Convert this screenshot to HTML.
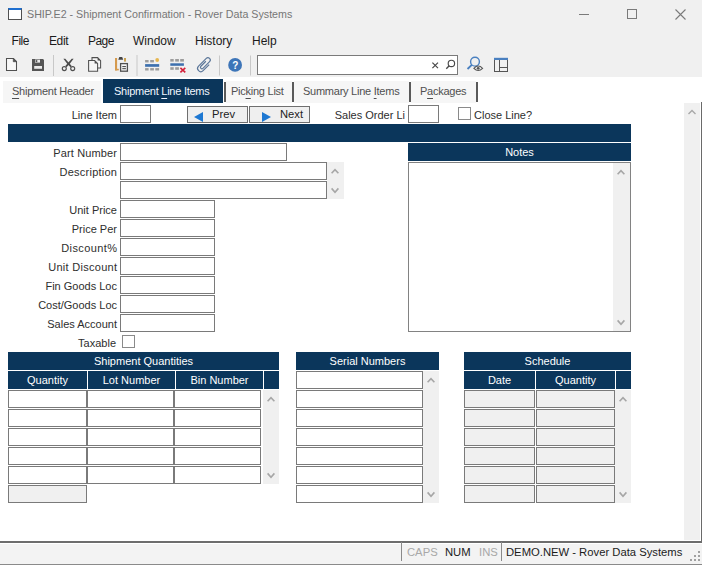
<!DOCTYPE html>
<html><head><meta charset="utf-8">
<style>
*{box-sizing:border-box;margin:0;padding:0}
html,body{width:702px;height:565px;overflow:hidden;background:#fff;font-family:"Liberation Sans",sans-serif}
.a{position:absolute}
.t{position:absolute;white-space:pre;line-height:14px}
#top{left:0;top:0;width:702px;height:77px;background:#f0f0f0}
.in{position:absolute;background:#fff;border:1px solid #7a7a7a}
.gr{position:absolute;background:#f0f0f0;border:1px solid #7a7a7a}
.hd{position:absolute;background:#0b365b;color:#fff;font-size:11px;line-height:18px;text-align:center;white-space:pre}
.lb{position:absolute;font-size:11px;color:#2e2e2e;text-align:right;white-space:pre;line-height:14px}
.sc{position:absolute;background:#f0f0f0}
.tab{position:absolute;top:81px;height:22px;background:#f6f6f6}
.tt{font-size:11px;letter-spacing:-0.25px}
.st{font-size:11.25px}
u{text-decoration-thickness:1px;text-underline-offset:3px}
.sep{position:absolute;width:1px;background:#a0a0a0}
.tsep{position:absolute;top:82px;width:2px;height:20px;background:#5a5a5a}
.btn{position:absolute;background:#efefef;border:1px solid #6f6f6f}
</style></head><body>
<div id="top" class="a"></div>

<!-- title bar -->
<div class="a" style="left:8px;top:8px;width:14px;height:12px;border:1px solid #505050;border-top:2px solid #1f6fd0;background:#fff"></div>
<div class="t" style="left:27px;top:7px;font-size:10.7px;color:#767676">SHIP.E2 - Shipment Confirmation - Rover Data Systems</div>
<div class="a" style="left:579px;top:14px;width:10px;height:1px;background:#7a7a7a"></div>
<div class="a" style="left:627px;top:9px;width:10px;height:10px;border:1px solid #7a7a7a"></div>
<svg class="a" style="left:675px;top:9px" width="11" height="11"><path d="M0.5 0.5L10.5 10.5M10.5 0.5L0.5 10.5" stroke="#7a7a7a" stroke-width="1.1"/></svg>

<!-- menu -->
<div class="t" style="left:11.5px;top:34px;font-size:12px;color:#1b1b1b;letter-spacing:-0.45px">File</div>
<div class="t" style="left:49px;top:34px;font-size:12px;color:#1b1b1b;letter-spacing:-0.4px">Edit</div>
<div class="t" style="left:88px;top:34px;font-size:12px;color:#1b1b1b;letter-spacing:-0.55px">Page</div>
<div class="t" style="left:133px;top:34px;font-size:12px;color:#1b1b1b">Window</div>
<div class="t" style="left:195px;top:34px;font-size:12px;color:#1b1b1b">History</div>
<div class="t" style="left:252px;top:34px;font-size:12px;color:#1b1b1b">Help</div>

<!-- toolbar -->

<svg class="a" style="left:0;top:52px" width="520" height="26" viewBox="0 52 520 26">
 <!-- new -->
 <path d="M6.5 58.5H13.5L16.5 61.5V70.5H6.5Z" fill="#f7f7f7" stroke="#505050" stroke-width="1.05"/>
 <path d="M13.3 58.5V61.7H16.5Z" fill="#505050" stroke="#505050" stroke-width="0.8"/>
 <!-- save -->
 <path d="M32 59H43L44 60V71H32Z" fill="#555"/>
 <rect x="35" y="59.6" width="5" height="3" fill="#ececec"/>
 <rect x="35.6" y="60.1" width="1.7" height="2" fill="#555"/>
 <rect x="34.2" y="66" width="7.8" height="2.8" fill="#ececec"/>
 <!-- sep -->
 <rect x="53" y="55" width="1" height="21" fill="#c8c8c8"/>
 <!-- scissors -->
 <path d="M63.4 58.7L65.3 58.7L71.7 65.9L70.5 67.2L67.4 64.1Z" fill="#4a4a4a"/>
 <path d="M73.6 58.7L71.7 58.7L65.3 65.9L66.5 67.2L69.6 64.1Z" fill="#4a4a4a"/>
 <circle cx="64.3" cy="68.6" r="2" fill="none" stroke="#505050" stroke-width="1.15"/>
 <circle cx="72.7" cy="68.6" r="2" fill="none" stroke="#505050" stroke-width="1.15"/>
 <!-- copy -->
 <path d="M92 57.6H97.6L100.6 60.6V68H92Z" fill="#f6f6f6" stroke="#505050" stroke-width="1.05"/>
 <path d="M97.6 57.6V60.6H100.6Z" fill="#505050"/>
 <path d="M88.6 60.5H94.6L97.6 63.5V71.3H88.6Z" fill="#f6f6f6" stroke="#505050" stroke-width="1.05"/>
 <path d="M94.6 60.5V63.5H97.6Z" fill="#505050"/>
 <!-- paste -->
 <rect x="115" y="58" width="2.1" height="12.4" fill="#d59a4e"/>
 <rect x="115" y="68.8" width="3.8" height="1.6" fill="#d59a4e"/>
 <rect x="124" y="58" width="2" height="3.6" fill="#c9a050"/>
 <path d="M118.3 59.8L119.3 57.1H122.2L123.2 59.8Z" fill="#444"/>
 <rect x="120.6" y="63.6" width="6.8" height="7.6" fill="#f6f6f6" stroke="#505050" stroke-width="1.3"/>
 <rect x="122.3" y="66" width="3.6" height="1.1" fill="#505050"/>
 <rect x="122.3" y="68.1" width="3.6" height="1.1" fill="#505050"/>
 <!-- sep -->
 <rect x="136.5" y="55" width="1" height="21" fill="#c8c8c8"/>
 <!-- insert row -->
 <rect x="145.1" y="60" width="3.5" height="2.4" fill="#9c9c9c"/>
 <rect x="150.2" y="60" width="3.7" height="2.4" fill="#9c9c9c"/>
 <circle cx="157.2" cy="60" r="1.9" fill="#e6b650"/>
 <rect x="145.1" y="64.1" width="14.1" height="2.7" fill="#3d70ae"/>
 <rect x="145.1" y="68.1" width="3.5" height="2.4" fill="#9c9c9c"/>
 <rect x="150.2" y="68.1" width="3.7" height="2.4" fill="#9c9c9c"/>
 <rect x="155.3" y="68.1" width="3.8" height="2.4" fill="#9c9c9c"/>
 <!-- delete row -->
 <rect x="170.3" y="59" width="3.4" height="2.6" fill="#9c9c9c"/>
 <rect x="175.2" y="59" width="3.7" height="2.6" fill="#9c9c9c"/>
 <rect x="180.2" y="59" width="3.7" height="2.6" fill="#9c9c9c"/>
 <rect x="170.3" y="63.3" width="13.6" height="2.5" fill="#3d70ae"/>
 <rect x="170.3" y="67.2" width="3.4" height="2.6" fill="#9c9c9c"/>
 <rect x="175.2" y="67.2" width="3.7" height="2.6" fill="#9c9c9c"/>
 <path d="M180.4 67.8L185.3 72.3M185.3 67.8L180.4 72.3" stroke="#d4203a" stroke-width="1.6"/>
 <!-- paperclip -->
 <g transform="translate(204.4 64.8) rotate(45) scale(1.17) translate(-2.75 -7.5)">
  <path d="M5.5 4.5V11.8A2.75 2.75 0 0 1 0 11.8V2.5A2 2 0 0 1 4 2.5V10.5A1.25 1.25 0 0 1 1.5 10.5V4.5" fill="none" stroke="#5a7598" stroke-width="1.0"/>
 </g>
 <!-- sep -->
 <rect x="219" y="55.5" width="1" height="20" fill="#c8c8c8"/>
 <!-- help -->
 <circle cx="235.1" cy="64.9" r="6.9" fill="#3d75b8"/>
 <text x="235.2" y="68.8" font-family="Liberation Sans" font-size="10" font-weight="bold" fill="#fff" text-anchor="middle">?</text>
 <!-- sep -->
 <rect x="250" y="55.5" width="1" height="20" fill="#c8c8c8"/>
 <!-- search box -->
 <rect x="257.5" y="55.5" width="200" height="19" fill="#fff" stroke="#7a7a7a" stroke-width="1"/>
 <path d="M432.4 62.6L438 68.1M438 62.6L432.4 68.1" stroke="#484848" stroke-width="1.2"/>
 <circle cx="451.4" cy="63.4" r="3.2" fill="none" stroke="#484848" stroke-width="1.15"/>
 <path d="M449.2 65.7L446.3 68.8" stroke="#484848" stroke-width="1.3"/>
 <!-- search eye -->
 <circle cx="475" cy="61.7" r="4.4" fill="none" stroke="#4a80c0" stroke-width="1.4"/>
 <path d="M471.8 64.9L467.5 69" stroke="#4a80c0" stroke-width="1.9"/>
 <path d="M473.9 68.3Q478.2 63.8 482.6 68.3Q478.2 72.8 473.9 68.3Z" fill="#f0f0f0" stroke="#555" stroke-width="1.1"/>
 <circle cx="478.2" cy="68.3" r="1.4" fill="#555"/>
 <!-- layout -->
 <rect x="494.5" y="58.5" width="13" height="13" fill="none" stroke="#555" stroke-width="1"/>
 <rect x="494" y="57.8" width="14" height="2.2" fill="#4a80c0"/>
 <path d="M499.5 60V71.5M499.5 67.5H507.5" stroke="#555" stroke-width="1"/>
</svg>


<!-- tabs -->
<div class="tab" style="left:3px;width:98px"></div>
<div class="a" style="left:103px;top:79px;width:120px;height:24px;background:#0b365b"></div>
<div class="tsep" style="left:224px"></div>
<div class="tab" style="left:226px;width:66px"></div>
<div class="tsep" style="left:292px"></div>
<div class="tab" style="left:294px;width:115px"></div>
<div class="tsep" style="left:409px"></div>
<div class="tab" style="left:411px;width:65px"></div>
<div class="tsep" style="left:476px"></div>
<div class="t tt" style="left:12px;top:84px;color:#505050"><u>S</u>hipment Header</div>
<div class="t tt" style="left:114px;top:84px;color:#f2f6ff">Shipment <u>L</u>ine Items</div>
<div class="t tt" style="left:231px;top:84px;color:#505050">Pic<u>k</u>ing List</div>
<div class="t tt" style="left:303px;top:84px;color:#505050">Summary Line <u>I</u>tems</div>
<div class="t tt" style="left:420px;top:84px;color:#505050">P<u>a</u>ckages</div>

<!-- right scrollbar -->
<div class="sc" style="left:684px;top:103px;width:16px;height:437px"></div>
<svg class="a" style="left:687px;top:108px" width="10" height="8"><path d="M1.5 6L5 2.5L8.5 6" fill="none" stroke="#a8a8a8" stroke-width="1.4"/></svg>
<div class="a" style="left:701px;top:102px;width:1px;height:439px;background:#6a6a6a"></div>

<!-- status bar -->
<div class="a" style="left:0;top:541px;width:702px;height:2px;background:#6d6d6d"></div>
<div class="a" style="left:0;top:544px;width:702px;height:20px;background:#f3f3f3"></div>
<div class="a" style="left:0;top:564px;width:702px;height:1px;background:#8a8a8a"></div>
<div class="a" style="left:401px;top:542px;width:1px;height:19px;background:#8a8a8a"></div>
<div class="a" style="left:501px;top:542px;width:1px;height:19px;background:#8a8a8a"></div>
<div class="t st" style="left:407px;top:545px;color:#a8a8a8">CAPS</div>
<div class="t st" style="left:445px;top:545px;color:#1b1b1b">NUM</div>
<div class="t st" style="left:479px;top:545px;color:#a8a8a8">INS</div>
<div class="t st" style="left:506px;top:545px;color:#1b1b1b">DEMO.NEW - Rover Data Systems</div>
<svg class="a" style="left:688px;top:549px" width="14" height="14"><g fill="#a0a0a0"><rect x="10" y="2" width="2" height="2"/><rect x="6" y="6" width="2" height="2"/><rect x="10" y="6" width="2" height="2"/><rect x="2" y="10" width="2" height="2"/><rect x="6" y="10" width="2" height="2"/><rect x="10" y="10" width="2" height="2"/></g></svg>

<div class="lb" style="right:585.00px;top:108px">Line Item</div>
<div class="in" style="left:120px;top:105px;width:31px;height:18px"></div>
<div class="btn" style="left:187px;top:106px;width:61px;height:17px"></div>
<svg class="a" style="left:187px;top:106px" width="61" height="17"><path d="M7 11L16 6V16Z" fill="#1e78d2"/></svg>
<div class="t" style="left:212px;top:107px;font-size:11.2px;color:#222;">Prev</div>
<div class="btn" style="left:249px;top:106px;width:61px;height:17px"></div>
<svg class="a" style="left:249px;top:106px" width="61" height="17"><path d="M13 6L22 11L13 16Z" fill="#1e78d2"/></svg>
<div class="t" style="left:280px;top:107px;font-size:11.2px;color:#222;">Next</div>
<div class="lb" style="right:297.00px;top:108px">Sales Order Li</div>
<div class="in" style="left:408px;top:105px;width:31px;height:18px"></div>
<div class="in" style="left:458px;top:107px;width:13px;height:13px;border-color:#8a8a8a"></div>
<div class="t" style="left:474px;top:108px;font-size:11px;color:#2e2e2e;">Close Line?</div>
<div class="a" style="left:8px;top:124px;width:623px;height:18px;background:#0b365b"></div>
<div class="lb" style="right:584.87px;top:146px;letter-spacing:0.13px">Part Number</div>
<div class="in" style="left:120px;top:143px;width:167px;height:18px"></div>
<div class="lb" style="right:584.75px;top:165px;letter-spacing:0.25px">Description</div>
<div class="in" style="left:120px;top:162px;width:207px;height:18px"></div>
<div class="in" style="left:120px;top:181px;width:207px;height:18px"></div>
<div class="sc" style="left:327px;top:162px;width:17px;height:37px"></div>
<svg class="a" style="left:330px;top:167px" width="10" height="8"><path d="M1.6 6.2L5 2.6L8.4 6.2" fill="none" stroke="#a6a6a6" stroke-width="1.6"/></svg>
<svg class="a" style="left:330px;top:186px" width="10" height="8"><path d="M1.6 2.4L5 6.2L8.4 2.4" fill="none" stroke="#a6a6a6" stroke-width="1.6"/></svg>
<div class="lb" style="right:585.00px;top:203px">Unit Price</div>
<div class="in" style="left:120px;top:200px;width:95px;height:18px"></div>
<div class="lb" style="right:585.00px;top:222px">Price Per</div>
<div class="in" style="left:120px;top:219px;width:95px;height:18px"></div>
<div class="lb" style="right:584.60px;top:241px;letter-spacing:0.4px">Discount%</div>
<div class="in" style="left:120px;top:238px;width:95px;height:18px"></div>
<div class="lb" style="right:584.72px;top:260px;letter-spacing:0.28px">Unit Discount</div>
<div class="in" style="left:120px;top:257px;width:95px;height:18px"></div>
<div class="lb" style="right:585.00px;top:279px">Fin Goods Loc</div>
<div class="in" style="left:120px;top:276px;width:95px;height:18px"></div>
<div class="lb" style="right:585.00px;top:298px">Cost/Goods Loc</div>
<div class="in" style="left:120px;top:295px;width:95px;height:18px"></div>
<div class="lb" style="right:585.00px;top:317px">Sales Account</div>
<div class="in" style="left:120px;top:314px;width:95px;height:18px"></div>
<div class="lb" style="right:586.00px;top:336px">Taxable</div>
<div class="in" style="left:122px;top:335px;width:13px;height:13px;border-color:#8a8a8a"></div>
<div class="hd" style="left:408px;top:143px;width:223px;height:18px;line-height:18px">Notes</div>
<div class="in" style="left:408px;top:162px;width:223px;height:170px;border-color:#828282"></div>
<div class="sc" style="left:613px;top:163px;width:17px;height:168px"></div>
<svg class="a" style="left:616px;top:168px" width="10" height="8"><path d="M1.6 6.2L5 2.6L8.4 6.2" fill="none" stroke="#a6a6a6" stroke-width="1.6"/></svg>
<svg class="a" style="left:616px;top:318px" width="10" height="8"><path d="M1.6 2.4L5 6.2L8.4 2.4" fill="none" stroke="#a6a6a6" stroke-width="1.6"/></svg>
<div class="hd" style="left:8px;top:352px;width:271px;height:18px;line-height:18px">Shipment Quantities</div>
<div class="hd" style="left:8px;top:371px;width:79px;height:18px;line-height:18px">Quantity</div>
<div class="hd" style="left:88px;top:371px;width:87px;height:18px;line-height:18px">Lot Number</div>
<div class="hd" style="left:176px;top:371px;width:87px;height:18px;line-height:18px">Bin Number</div>
<div class="hd" style="left:264px;top:371px;width:15px;height:18px;line-height:18px"></div>
<div class="in" style="left:8px;top:390px;width:79px;height:18px"></div>
<div class="in" style="left:87px;top:390px;width:87px;height:18px"></div>
<div class="in" style="left:174px;top:390px;width:87px;height:18px"></div>
<div class="in" style="left:8px;top:409px;width:79px;height:18px"></div>
<div class="in" style="left:87px;top:409px;width:87px;height:18px"></div>
<div class="in" style="left:174px;top:409px;width:87px;height:18px"></div>
<div class="in" style="left:8px;top:428px;width:79px;height:18px"></div>
<div class="in" style="left:87px;top:428px;width:87px;height:18px"></div>
<div class="in" style="left:174px;top:428px;width:87px;height:18px"></div>
<div class="in" style="left:8px;top:447px;width:79px;height:18px"></div>
<div class="in" style="left:87px;top:447px;width:87px;height:18px"></div>
<div class="in" style="left:174px;top:447px;width:87px;height:18px"></div>
<div class="in" style="left:8px;top:466px;width:79px;height:18px"></div>
<div class="in" style="left:87px;top:466px;width:87px;height:18px"></div>
<div class="in" style="left:174px;top:466px;width:87px;height:18px"></div>
<div class="sc" style="left:263px;top:390px;width:16px;height:94px"></div>
<svg class="a" style="left:266px;top:395px" width="10" height="8"><path d="M1.6 6.2L5 2.6L8.4 6.2" fill="none" stroke="#a6a6a6" stroke-width="1.6"/></svg>
<svg class="a" style="left:266px;top:471px" width="10" height="8"><path d="M1.6 2.4L5 6.2L8.4 2.4" fill="none" stroke="#a6a6a6" stroke-width="1.6"/></svg>
<div class="gr" style="left:8px;top:485px;width:79px;height:18px"></div>
<div class="hd" style="left:296px;top:352px;width:143px;height:18px;line-height:18px">Serial Numbers</div>
<div class="in" style="left:296px;top:371px;width:127px;height:18px"></div>
<div class="in" style="left:296px;top:390px;width:127px;height:18px"></div>
<div class="in" style="left:296px;top:409px;width:127px;height:18px"></div>
<div class="in" style="left:296px;top:428px;width:127px;height:18px"></div>
<div class="in" style="left:296px;top:447px;width:127px;height:18px"></div>
<div class="in" style="left:296px;top:466px;width:127px;height:18px"></div>
<div class="in" style="left:296px;top:485px;width:127px;height:18px"></div>
<div class="sc" style="left:423px;top:371px;width:16px;height:132px"></div>
<svg class="a" style="left:426px;top:376px" width="10" height="8"><path d="M1.6 6.2L5 2.6L8.4 6.2" fill="none" stroke="#a6a6a6" stroke-width="1.6"/></svg>
<svg class="a" style="left:426px;top:490px" width="10" height="8"><path d="M1.6 2.4L5 6.2L8.4 2.4" fill="none" stroke="#a6a6a6" stroke-width="1.6"/></svg>
<div class="hd" style="left:464px;top:352px;width:167px;height:18px;line-height:18px">Schedule</div>
<div class="hd" style="left:464px;top:371px;width:71px;height:18px;line-height:18px">Date</div>
<div class="hd" style="left:536px;top:371px;width:79px;height:18px;line-height:18px">Quantity</div>
<div class="hd" style="left:616px;top:371px;width:15px;height:18px;line-height:18px"></div>
<div class="gr" style="left:464px;top:390px;width:71px;height:18px"></div>
<div class="gr" style="left:536px;top:390px;width:79px;height:18px"></div>
<div class="gr" style="left:464px;top:409px;width:71px;height:18px"></div>
<div class="gr" style="left:536px;top:409px;width:79px;height:18px"></div>
<div class="gr" style="left:464px;top:428px;width:71px;height:18px"></div>
<div class="gr" style="left:536px;top:428px;width:79px;height:18px"></div>
<div class="gr" style="left:464px;top:447px;width:71px;height:18px"></div>
<div class="gr" style="left:536px;top:447px;width:79px;height:18px"></div>
<div class="gr" style="left:464px;top:466px;width:71px;height:18px"></div>
<div class="gr" style="left:536px;top:466px;width:79px;height:18px"></div>
<div class="gr" style="left:464px;top:485px;width:71px;height:18px"></div>
<div class="gr" style="left:536px;top:485px;width:79px;height:18px"></div>
<div class="sc" style="left:615px;top:390px;width:16px;height:113px"></div>
<svg class="a" style="left:618px;top:395px" width="10" height="8"><path d="M1.6 6.2L5 2.6L8.4 6.2" fill="none" stroke="#a6a6a6" stroke-width="1.6"/></svg>
<svg class="a" style="left:618px;top:490px" width="10" height="8"><path d="M1.6 2.4L5 6.2L8.4 2.4" fill="none" stroke="#a6a6a6" stroke-width="1.6"/></svg>
</body></html>
